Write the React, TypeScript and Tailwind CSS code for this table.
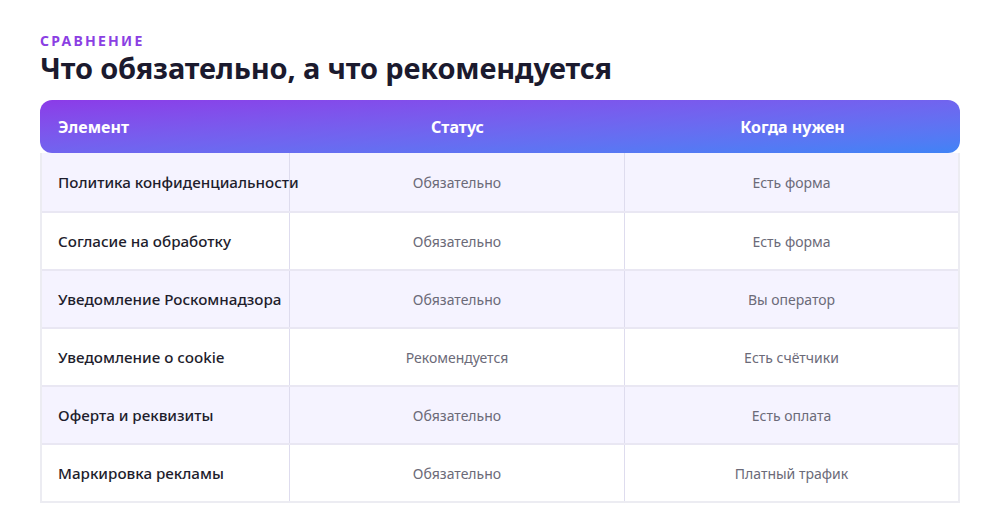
const rows = [
  ["Политика конфиденциальности", "Обязательно", "Есть форма"],
  ["Согласие на обработку", "Обязательно", "Есть форма"],
  ["Уведомление Роскомнадзора", "Обязательно", "Вы оператор"],
  ["Уведомление о cookie", "Рекомендуется", "Есть счётчики"],
  ["Оферта и реквизиты", "Обязательно", "Есть оплата"],
  ["Маркировка рекламы", "Обязательно", "Платный трафик"],
];

export default function App() {
  return (
    <div className="w-[1000px] h-[522px] bg-white px-10 pt-[32px] font-['Noto_Sans',sans-serif]">
      <div className="text-[14px] leading-[18px] font-bold tracking-[0.16em] text-[#8b3fe3]">
        СРАВНЕНИЕ
      </div>
      <h1 className="text-[29px] leading-[36px] font-bold text-[#1b1a2e] tracking-[-0.005em]">
        Что обязательно, а что рекомендуется
      </h1>
      <div className="mt-[14px] w-[920px]">
        <div className="grid grid-cols-[250px_335px_335px] h-[53px] items-center rounded-xl bg-gradient-to-br from-[#8b3be8] to-[#3f83f6] text-white text-[16px] font-bold">
          <div className="pl-[18px]">Элемент</div>
          <div className="text-center">Статус</div>
          <div className="text-center">Когда нужен</div>
        </div>
        <div className="border-x-2 border-b-2 border-[#ececf2]">
          {rows.map((r, i) => (
            <div
              key={i}
              className={`grid grid-cols-[248px_335px_333px] h-[58px] items-center ${i > 0 ? "border-t-2 border-[#e9e7f3]" : ""} ${i % 2 === 0 ? "bg-[#f5f3ff]" : "bg-white"}`}
            >
              <div className="h-full flex items-center pl-4 pt-[1px] whitespace-nowrap text-[15.2px] font-medium text-[#1e1d2c] border-r border-[#dedcee]">
                {r[0]}
              </div>
              <div className="h-full flex items-center justify-center pt-[1px] text-[14px] text-[#6b6a78] border-r border-[#dedcee]">
                {r[1]}
              </div>
              <div className="h-full flex items-center justify-center pt-[1px] text-[14px] text-[#6b6a78]">
                {r[2]}
              </div>
            </div>
          ))}
        </div>
      </div>
    </div>
  );
}
